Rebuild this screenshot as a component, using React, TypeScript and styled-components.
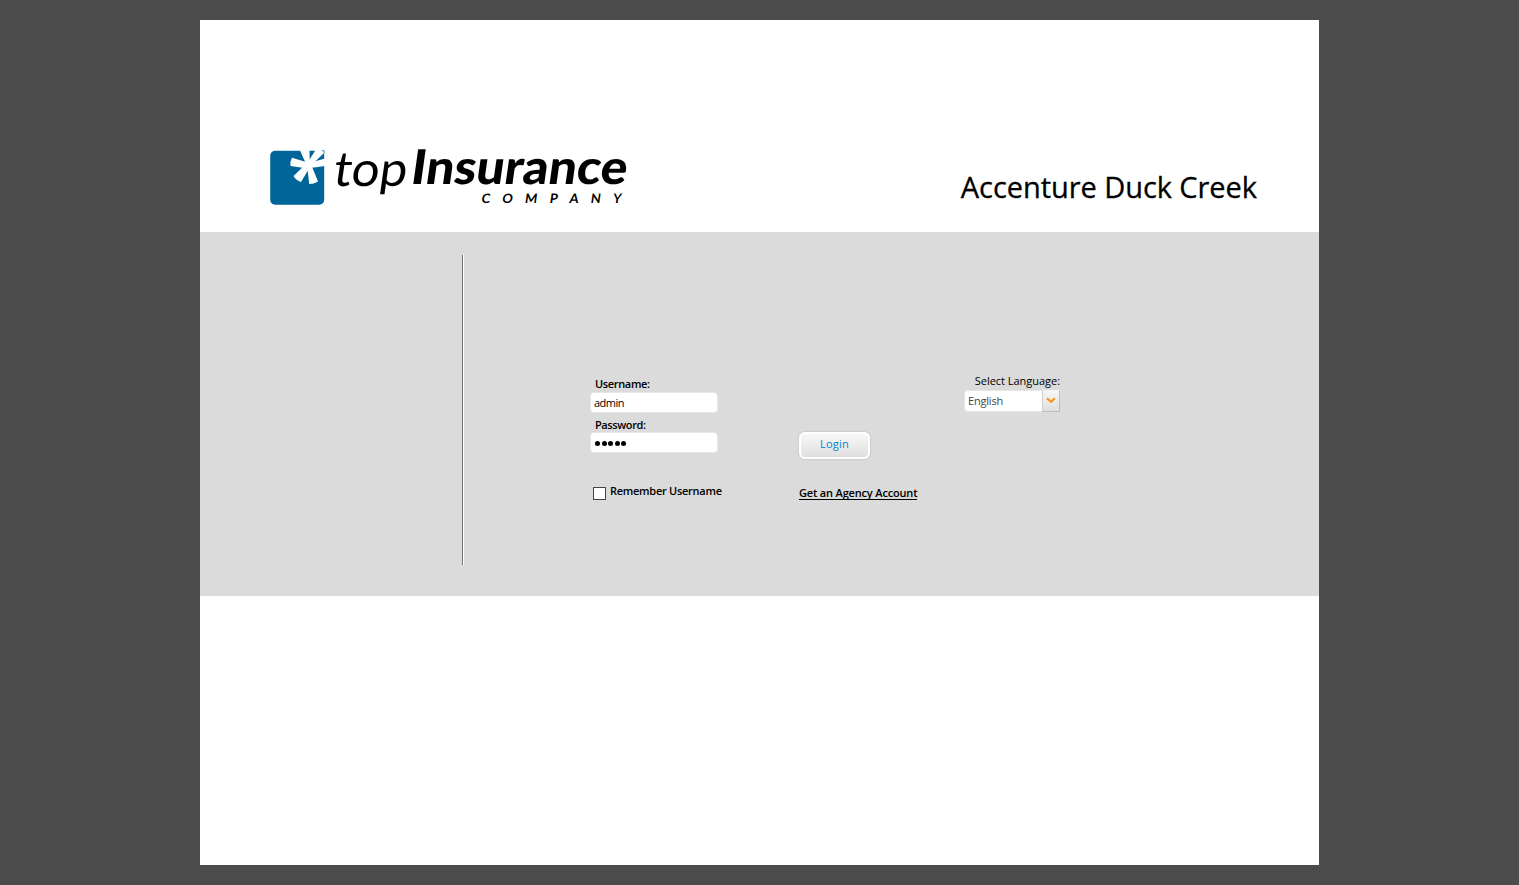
import React from 'react';
import styled, { createGlobalStyle } from 'styled-components';

const GlobalStyle = createGlobalStyle`
  * { box-sizing: border-box; }
  body {
    margin: 0;
    background: #4c4c4c;
    color: #000;
    font-family: 'Trebuchet MS', 'Open Sans', 'Noto Sans', sans-serif;
    font-size: 11px;
  }
`;

const Page = styled.main`
  width: 1119px;
  height: 845px;
  margin: 20px 200px;
  background: #fff;
`;

const Header = styled.header`
  height: 212px;
  display: flex;
  justify-content: space-between;
  align-items: flex-start;
  padding: 105px 62px 0 66px;
`;

const LogoSvg = styled.svg`
  display: block;
  flex: none;
`;

const Title = styled.h1`
  margin: 42px 0 0;
  font-size: 29px;
  line-height: 40px;
  font-weight: 400;
  letter-spacing: -0.06px;
  white-space: nowrap;
  -webkit-text-stroke: 0.3px #000;
`;

const Band = styled.section`
  height: 364px;
  display: flex;
  align-items: flex-start;
  background: #dbdbdb;
`;

const Divider = styled.div`
  width: 2px;
  height: 310px;
  margin: 23px 0 0 262px;
  border-left: 1px solid #707070;
  border-right: 1px solid #fff;
`;

const Form = styled.form`
  display: grid;
  grid-template-columns: 208px 166px 96px;
  margin: 142px 0 0 126px;
`;

const Column = styled.div`
  display: flex;
  flex-direction: column;
  align-items: flex-start;
`;

const Label = styled.label<{ $spacing?: string; $weight?: number; $line?: number }>`
  height: 18px;
  line-height: ${({ $line = 18 }) => $line}px;
  font-weight: ${({ $weight = 600 }) => $weight};
  letter-spacing: ${({ $spacing = '0' }) => $spacing};
  white-space: nowrap;
`;

const Field = styled.div`
  display: flex;
  flex-direction: column;
  height: 40px;

  ${Label} { padding-left: 5px; }
`;

const Input = styled.input`
  width: 128px;
  height: 21px;
  padding: 0 3px 1px;
  border: 1px solid #e6e6e6;
  border-radius: 4px;
  outline: 0;
  background: #fff;
  color: #000;
  font: 11px 'Open Sans', sans-serif;
  letter-spacing: -0.5px;
`;

const Dots = styled.div`
  width: 128px;
  height: 21px;
  display: flex;
  align-items: center;
  gap: 1.5px;
  padding: 1px 4px 0;
  border: 1px solid #e6e6e6;
  border-radius: 4px;
  background: #fff;
`;

const Dot = styled.span`
  width: 5px;
  height: 5px;
  border-radius: 50%;
  background: #000;
`;

const Remember = styled.div`
  display: flex;
  align-items: flex-start;
  gap: 4px;
  margin: 28px 0 0 3px;
`;

const Checkbox = styled.input`
  appearance: none;
  width: 13px;
  height: 13px;
  margin: 5px 0 0;
  border: 1px solid #444;
  background: #fff;
`;

const LoginButton = styled.button`
  width: 71px;
  height: 27px;
  margin: 58px 0 0 1px;
  padding: 0 0 4px;
  border: 2px solid #fff;
  border-radius: 6px;
  box-shadow: 0 0 1px 1px #cdcdcd;
  background: linear-gradient(#f8f8f8, #dfdfdf);
  color: #0084d0;
  font: 11px/18px 'Open Sans', sans-serif;
  letter-spacing: 0.2px;
`;

const AgencyLink = styled.a`
  margin: 27px 0 0 1px;
  height: 14px;
  line-height: 14px;
  border-bottom: 1px solid #000;
  color: #000;
  font-weight: 600;
  letter-spacing: -0.17px;
  text-decoration: none;
  white-space: nowrap;
`;

const Language = styled.div`
  display: flex;
  flex-direction: column;
  align-items: flex-end;
  margin-top: -2px;
`;

const Select = styled.div`
  width: 96px;
  height: 22px;
  display: flex;
  border-radius: 4px 0 0 4px;
  background: #fff;
  border: 1px solid #e6e6e6;
  border-right: 0;
  color: #444;
  line-height: 20px;
`;

const Value = styled.span`
  flex: 1;
  padding-left: 3px;
  letter-spacing: -0.2px;
`;

const Arrow = styled.span`
  width: 18px;
  height: 22px;
  margin-top: -1px;
  padding: 0 1px 2px 0;
  display: flex;
  align-items: center;
  justify-content: center;
  border: 1px solid #bdbdbd;
  border-top-color: #f5f5f5;
  border-left-color: #d0d0d0;
  background: linear-gradient(#f7f7f7, #dedede);
`;

function Logo() {
  return (
    <LogoSvg width="380" height="100" viewBox="266 125 380 100" role="img" aria-label="topInsurance Company">
      <rect x="270.200" y="150.700" width="54" height="54" rx="5" fill="#006699" />
      <g fill="#fff">
        <path d="M306 164 L299.800 150 H309.500 L309.800 163Z" />
        <path d="M307.500 163 L315.500 150 H322.500 L324.500 152.500 L312 164.500Z" />
        <path d="M309 163 L325 158.500 V166 L310 168Z" />
        <path d="M307 165 L311.500 165.500 L318 181.500 Q314 184 309.200 184Z" />
        <path d="M304.500 165.500 L310 167 L301 182 Q296 180.500 293.500 176Z" />
        <path d="M308.500 162.800 L307.500 168.500 L290.500 166 Q289.800 161.500 292 157.800Z" />
        <circle cx="308.500" cy="165" r="3.500" />
      </g>
      <path d="M321.800 150.700h2.400v3" fill="none" stroke="#006699" strokeWidth=".7" />
      <g fontFamily="Lato">
        <text transform="translate(332 186) skewX(-8)" fontSize="48.500" textLength="73.500" lengthAdjust="spacingAndGlyphs">top</text>
        <text transform="translate(409.500 183.500) skewX(-8)" fontWeight="900" fontSize="48" textLength="216" lengthAdjust="spacingAndGlyphs">Insurance</text>
        <text transform="translate(481 202.500) skewX(-8)" fontWeight="700" fontSize="13" textLength="140">COMPANY</text>
      </g>
    </LogoSvg>
  );
}

export default function App() {
  return (
    <>
      <GlobalStyle />
      <Page>
        <Header>
          <Logo />
          <Title>Accenture Duck Creek</Title>
        </Header>
        <Band>
          <Divider />
          <Form onSubmit={(event) => event.preventDefault()}>
            <Column>
              <Field>
                <Label htmlFor="username" $spacing="-0.35px" $line={20}>Username:</Label>
                <Input id="username" defaultValue="admin" />
              </Field>
              <Field>
                <Label $spacing="-0.4px" $line={22}>Password:</Label>
                <Dots aria-label="Password">
                  {[0, 1, 2, 3, 4].map((dot) => <Dot key={dot} />)}
                </Dots>
              </Field>
              <Remember>
                <Checkbox type="checkbox" id="remember" />
                <Label htmlFor="remember" $spacing="-0.27px">Remember Username</Label>
              </Remember>
            </Column>
            <Column>
              <LoginButton type="submit">Login</LoginButton>
              <AgencyLink href="#">Get an Agency Account</AgencyLink>
            </Column>
            <Language>
              <Label $weight={400} $spacing="-0.03px">Select Language:</Label>
              <Select>
                <Value>English</Value>
                <Arrow>
                  <svg width="10" height="7" viewBox="0 0 10 7">
                    <path d="M1 1.200 5 4.800 9 1.200" fill="none" stroke="#f7941d" strokeWidth="2.200" />
                  </svg>
                </Arrow>
              </Select>
            </Language>
          </Form>
        </Band>
      </Page>
    </>
  );
}
